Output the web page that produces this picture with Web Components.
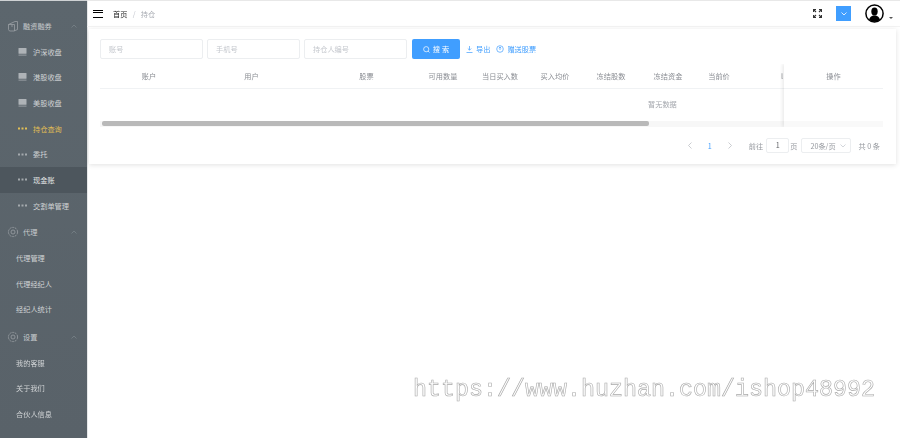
<!DOCTYPE html>
<html lang="zh"><head><meta charset="utf-8"><title>持仓</title>
<style>
html,body{margin:0;height:438px;overflow:hidden;background:#fff}
body{font:7.2px "Noto Sans CJK SC","Liberation Sans",sans-serif;color:#606266}
</style></head><body>
<app-shell>
  <side-nav slot="side">
    <nav-group icon="box" style="--mt:12px">融资融券</nav-group>
    <nav-item icon="db">沪深收盘</nav-item>
    <nav-item icon="db">港股收盘</nav-item>
    <nav-item icon="db">美股收盘</nav-item>
    <nav-item icon="dots" state="on">持仓查询</nav-item>
    <nav-item icon="dots">委托</nav-item>
    <nav-item icon="dots" state="cur">现金账</nav-item>
    <nav-item icon="dots">交割单管理</nav-item>
    <nav-group icon="gear" style="--mt:1px">代理</nav-group>
    <nav-item flat>代理管理</nav-item>
    <nav-item flat>代理经纪人</nav-item>
    <nav-item flat>经纪人统计</nav-item>
    <nav-group icon="gear" style="--mt:2px">设置</nav-group>
    <nav-item flat>我的客服</nav-item>
    <nav-item flat>关于我们</nav-item>
    <nav-item flat>合伙人信息</nav-item>
  </side-nav>
  <top-bar slot="top"></top-bar>
  <main-card slot="main">
    <filter-bar></filter-bar>
    <data-table></data-table>
    <pager-bar></pager-bar>
  </main-card>
</app-shell>
<water-mark>https://www.huzhan.com/ishop48992</water-mark>
<script>
const def=(n,html)=>customElements.define(n,class extends HTMLElement{
  constructor(){super();this.attachShadow({mode:'open'});if(typeof html!=='function')this.shadowRoot.innerHTML=html}
  connectedCallback(){if(typeof html==='function'&&!this._r){this._r=1;this.shadowRoot.innerHTML=html(this)}}
});
const icons={
 db:'<svg width="9" height="8" viewBox="0 0 9 8"><rect x=".5" y="0" width="8" height="5.800" rx=".6" fill="#aeb3b7"/><rect x=".5" y="6.600" width="8" height="1" fill="#9aa0a5"/></svg>',
 dots:c=>`<svg width="9" height="3" viewBox="0 0 9 3" fill="${c}"><rect y=".5" width="2" height="2"/><rect x="3.500" y=".5" width="2" height="2"/><rect x="7" y=".5" width="2" height="2"/></svg>`,
 box:'<svg width="12" height="12" viewBox="0 0 12 12" fill="none" stroke="#9aa0a5" stroke-width=".8"><path d="M1.500 4.500 8 1.500h2.500v8L7 11H2.500l-1-1.500z"/><path d="M1.500 4.500H7.500V11M5 4.500V7"/></svg>',
 gear:'<svg width="12" height="12" viewBox="0 0 12 12" fill="none" stroke="#9aa0a5" stroke-width=".8"><circle cx="6" cy="6" r="2"/><circle cx="6" cy="6" r="4.600" stroke-dasharray="2.200 .7"/></svg>'
};
def('app-shell',`<style>:host{display:grid;grid-template-columns:87px 1fr;grid-template-rows:27px 1fr;height:438px;width:900px;filter:blur(.4px)}
 .s{grid-row:1/3;display:block}.m{min-width:0}</style>
 <div class="s"><slot name="side"></slot></div><div class="m"><slot name="top"></slot></div><div class="m"><slot name="main"></slot></div>`);
def('side-nav',`<style>:host{display:flex;flex-direction:column;height:438px;background:linear-gradient(#5c666d,#596269);border-right:1px solid #e6e8e9;box-sizing:border-box;width:88px;border-top:1px solid #cfd2d4}</style><slot></slot>`);
def('nav-group',h=>`<style>:host{display:flex;align-items:center;height:25.7px;margin-top:var(--mt,0);color:#c8ccce;padding-left:7px;box-sizing:border-box;flex:none}
 .t{margin-left:4px;flex:1} svg{display:block}.a{margin-right:10px}</style>${icons[h.getAttribute('icon')]||''}<span class="t"><slot></slot></span>
 <svg class="a" width="6" height="4" viewBox="0 0 6 4" fill="none" stroke="#7d868c" stroke-width=".7"><path d="M.5 3.500 3 1l2.500 2.500"/></svg>`);
def('nav-item',h=>{const st=h.getAttribute('state'),flat=h.hasAttribute('flat'),ic=h.getAttribute('icon');
 const col=st==='on'?'#e2bf55':(st==='cur'?'#e4e6e7':'#d0d3d5');
 const g=ic==='dots'?icons.dots(st==='on'?'#e2bf55':'#a4a9ad'):(icons[ic]||'');
 return `<style>:host{display:flex;align-items:center;height:25.7px;flex:none;box-sizing:border-box;padding-left:${flat?16:18}px;color:${col};${st==='cur'?'background:#4d565d;':''}}
 .i{width:15px;flex:none;display:flex}</style>${flat?'':`<span class="i">${g}</span>`}<slot></slot>`});
def('top-bar',`<style>:host{display:flex;align-items:center;height:27px;box-sizing:border-box;padding:0 7px 0 6px;border-top:1px solid #e8e8e8;border-bottom:1px solid #f3f3f3;color:#222}
 .h{width:10px;height:8px;border-top:1.200px solid #000;border-bottom:1.200px solid #000;position:relative;box-sizing:border-box;margin-right:10px}
 .h:after{content:"";position:absolute;left:0;right:0;top:1.700px;height:1.200px;background:#000}
 .sep{margin:0 5.300px;color:#c0c4cc}.cur{color:#a8abb2}.sp{flex:1}
 .blue{width:15px;height:15px;background:#409eff;display:flex;align-items:center;justify-content:center;margin:0 14px 0 14px}
 svg{display:block}.car{width:0;height:0;border:2px solid transparent;border-top:2px solid #555;border-bottom:0;margin-left:5px;margin-top:9px}</style>
 <div class="h"></div><span>首页</span><span class="sep">/</span><span class="cur">持仓</span><span class="sp"></span>
 <svg width="9" height="9" viewBox="0 0 9 9" fill="none" stroke="#333" stroke-width="1.100"><path d="M.5 3V.5H3M6 .5h2.500V3M8.500 6v2.500H6M3 8.500H.5V6M1 1l2 2M8 1 6 3M8 8 6 6M1 8l2-2"/></svg>
 <div class="blue"><svg width="6" height="4" viewBox="0 0 6 4" fill="none" stroke="#fff" stroke-width=".8"><path d="M.5.500 3 3 5.500.5"/></svg></div>
 <svg width="19" height="19" viewBox="0 0 19 19"><circle cx="9.500" cy="9.500" r="8.600" fill="#fff" stroke="#000" stroke-width="1.500"/><ellipse cx="9.500" cy="7.500" rx="3.200" ry="4" fill="#000"/><path d="M4 15.500c1-3 3-3.500 4-4h3c1 .5 3 1 4 4a8 8 0 0 1-11 0z" fill="#000"/></svg>
 <span class="car"></span>`);
def('main-card',`<style>:host{display:block;margin:2px 4px 0 2px;box-sizing:border-box;height:135px;padding:10px 12px 0 11px;background:#fff;box-shadow:0 1px 5px rgba(0,0,0,.12)}</style><slot></slot>`);
def('filter-bar',`<style>:host{display:flex;align-items:center;height:20px}
 .in{width:103px;height:20px;box-sizing:border-box;border:1px solid #eceef0;border-radius:2px;padding-left:8px;color:#c4c7cd;display:flex;align-items:center;margin-right:4px;flex:none}
 .n2{width:93px}
 .btn{width:48px;height:20px;margin-left:1px;background:#409eff;color:#fff;border-radius:2px;display:flex;align-items:center;justify-content:center;gap:3px;flex:none}
 .btn b{font-weight:400;letter-spacing:2px;margin-right:-2px}
 .l{color:#409eff;display:flex;align-items:center;gap:3px;margin-left:6px}svg{display:block}</style>
 <span class="in">账号</span><span class="in n2">手机号</span><span class="in">持仓人编号</span>
 <span class="btn"><svg width="7" height="7" viewBox="0 0 7 7" fill="none" stroke="#fff" stroke-width=".7"><circle cx="3.200" cy="3.200" r="2.600"/><path d="m5 5 1.500 1.500"/></svg><b>搜索</b></span>
 <span class="l"><svg width="7" height="7" viewBox="0 0 7 7" fill="none" stroke="#409eff" stroke-width=".7"><path d="M3.500 0v4M1.800 2.500l1.700 1.700 1.700-1.700M.5 6.500h6"/></svg>导出</span>
 <span class="l"><svg width="8" height="8" viewBox="0 0 8 8" fill="none" stroke="#409eff" stroke-width=".7"><circle cx="4" cy="4" r="3.300"/><path d="M4 2v3M2.800 3.200 4 2l1.200 1.200"/></svg>赠送股票</span>`);
const cols=[['账户',68],['用户',137],['股票',93],['可用数量',60],['当日买入数',54],['买入均价',56],['冻结股数',56],['冻结资金',58],['当前价',44]];
def('data-table',`<style>:host{display:flex;height:63px;margin-top:5px;color:#8a8d93;width:783px}
 .l{width:684px;flex:none;display:flex;flex-direction:column}
 .r{width:99px;flex:none;box-shadow:-2px 0 3px rgba(0,0,0,.07);clip-path:inset(0 0 0 -6px);background:#fff;display:flex;flex-direction:column}
 .hd{height:24px;border-bottom:1px solid #f0f2f4;display:flex;align-items:center;flex:none;padding-left:15px;overflow:hidden}
 .hd span{text-align:center;flex:none;white-space:nowrap}
 .e{height:32px;box-sizing:border-box;padding-bottom:2px;display:flex;align-items:center;color:#a4a7ad;flex:none}
 .e span{margin-left:548px}
 .tr{height:6px;background:#f7f7f7;flex:none}.th{width:547px;height:5px;background:#b9b9b9;margin-left:2px;border-radius:2px}
 .r .hd{justify-content:center;padding:0}.sp{flex:1}.rt{height:6px;background:#f9f9f9;flex:none}</style>
 <div class="l"><div class="hd">${cols.map(c=>`<span style="width:${c[1]}px">${c[0]}</span>`).join('')}<span style="width:42px;text-align:right;overflow:hidden;direction:rtl">l</span></div>
 <div class="e"><span>暂无数据</span></div><div class="tr"><div class="th"></div></div></div>
 <div class="r"><div class="hd"><span>操作</span></div><div class="sp"></div><div class="rt"></div></div>`);
def('pager-bar',`<style>:host{display:flex;align-items:center;justify-content:flex-end;height:37px;color:#95989e;padding-right:4px}
 .n{width:20px;text-align:center;display:flex;justify-content:center}.cur{color:#409eff;font-weight:400}
 .in{width:23px;height:15px;border:1px solid #eceef0;box-sizing:border-box;border-radius:2px;text-align:center;line-height:13px;margin:0 1px 0 3px;color:#606266}
 .sel{width:50px;height:15px;border:1px solid #eceef0;box-sizing:border-box;border-radius:2px;margin:0 7px 0 4px;padding:0 4px 0 8px;display:flex;align-items:center;justify-content:space-between}
 .g{margin-left:9px}svg{display:block}</style>
 <span class="n"><svg width="4" height="7" viewBox="0 0 4 7" fill="none" stroke="#b5b8bd" stroke-width=".7"><path d="M3.500.5.500 3.500l3 3"/></svg></span>
 <span class="n cur">1</span>
 <span class="n"><svg width="4" height="7" viewBox="0 0 4 7" fill="none" stroke="#b5b8bd" stroke-width=".7"><path d="m.5.5 3 3-3 3"/></svg></span>
 <span class="g">前往</span><span class="in">1</span><span>页</span>
 <span class="sel">20条/页<svg width="6" height="4" viewBox="0 0 6 4" fill="none" stroke="#c0c4cc" stroke-width=".7"><path d="M.5.500 3 3 5.500.5"/></svg></span>
 <span>共 0 条</span>`);
def('water-mark',`<style>:host{position:absolute;left:413px;top:376px;font:23.330px/28px "Liberation Mono",monospace;color:#fff;-webkit-text-stroke:.6px #a9a9a9;white-space:nowrap}</style><slot></slot>`);
</script>
</body></html>
